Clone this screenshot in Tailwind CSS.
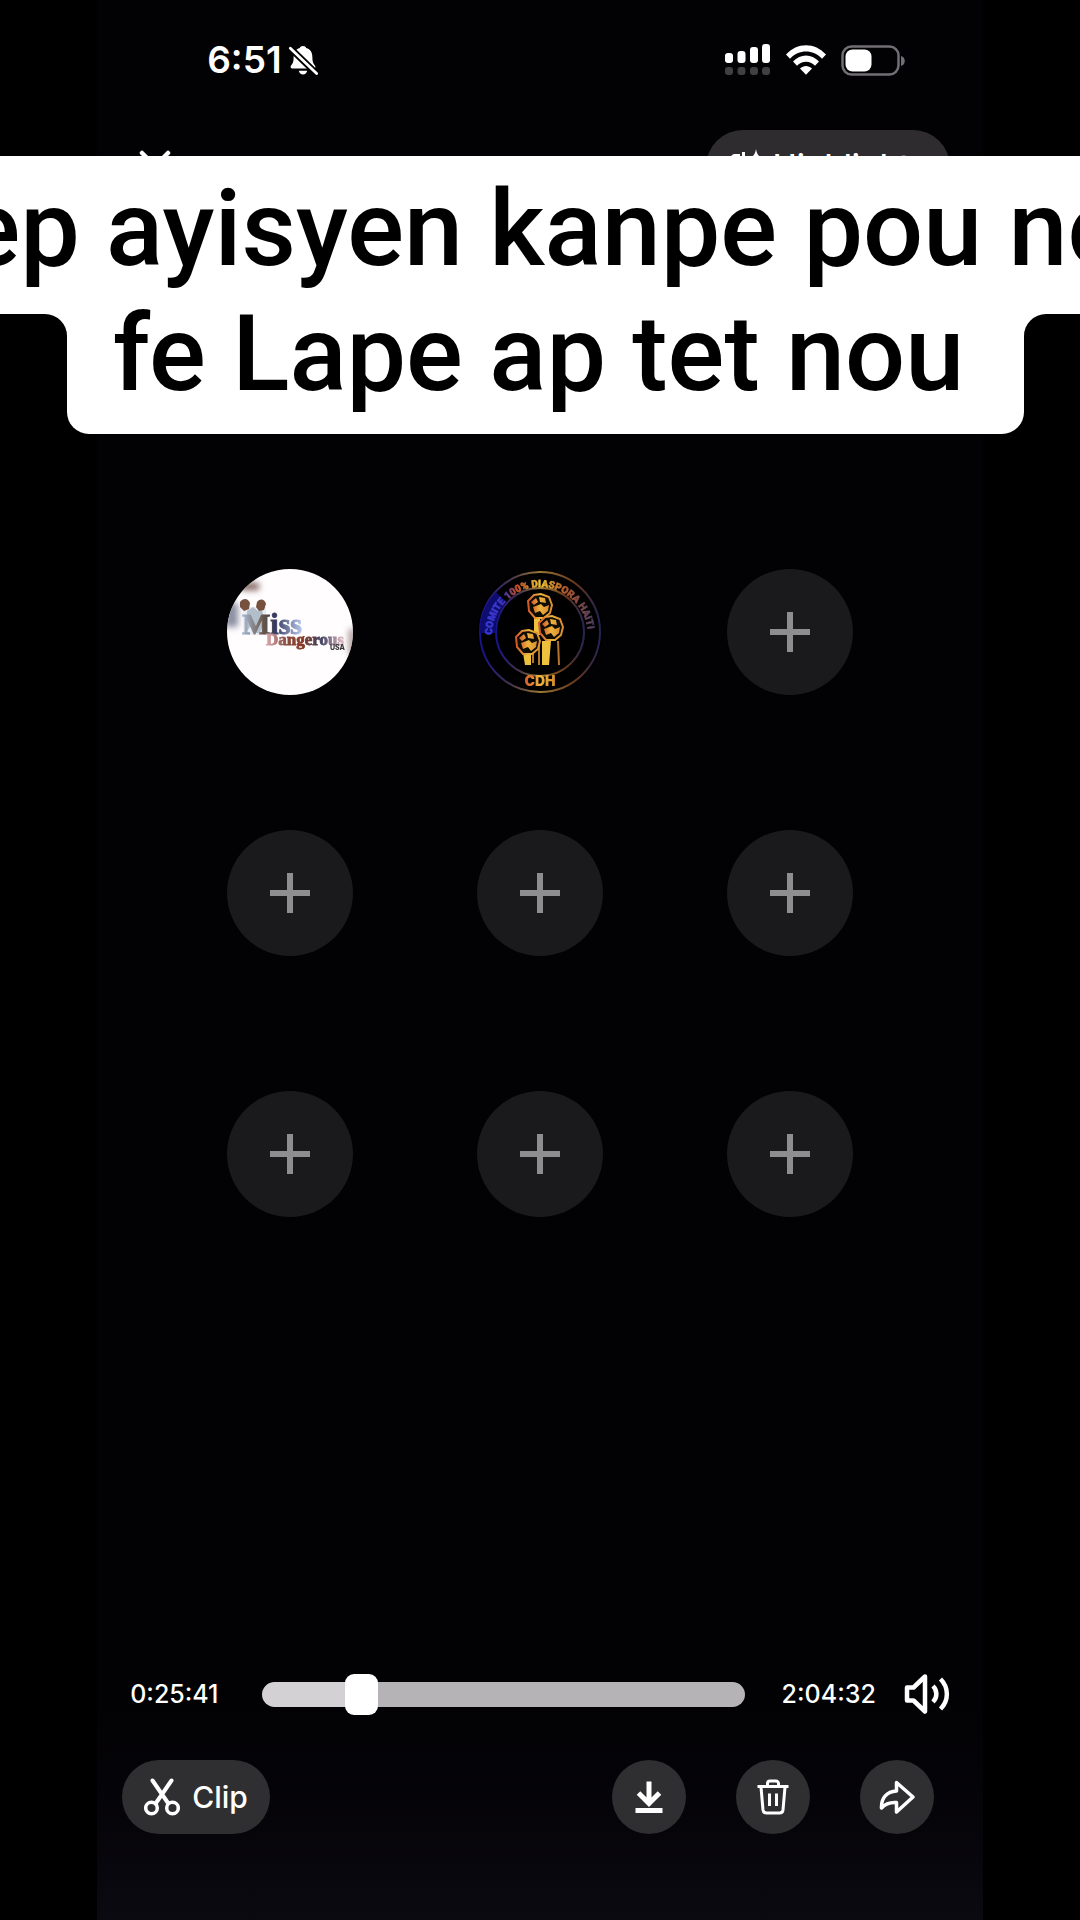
<!DOCTYPE html>
<html lang="ht">
<head>
    <meta charset="UTF-8" />
    <meta name="viewport" content="width=device-width, initial-scale=1" />
    <title>Replay</title>
    <script src="https://cdn.jsdelivr.net/npm/@tailwindcss/browser@4"></script>
</head>
<body class="relative min-h-screen flex flex-col overflow-x-hidden bg-black font-['Inter',sans-serif] text-white">
    <div class="mx-[9%] flex grow flex-col bg-linear-to-b from-[#020103] from-88% to-[#0b0a11]">
        <!-- Status bar -->
        <header class="flex h-[120px] items-center justify-between pl-[110px] pr-[78px]">
            <div class="flex items-center gap-[6px]">
                <span class="text-[37px] leading-[44px] font-semibold">6:51</span>
                <svg class="h-8 w-[30px]" viewBox="0 0 32 32" fill="#fff">
                    <path d="M16 1c2 0 3 1 3.400 2.200C24 4.500 26 8 26 13c0 6 1.500 7 3 9.500.600 1.500 0 2.500-1.500 2.500H4.500C3 25 2.400 24 3 22.500 4.500 20 6 19 6 13c0-5 2-8.500 6.600-9.800C13 2 14 1 16 1zM11.500 27.500h9c-.5 2.400-2.300 4-4.500 4s-4-1.600-4.500-4z" />
                    <path d="M2 3l29 28" stroke="#000" stroke-width="7" />
                    <path d="M2.500 3.500l28 27" stroke="#fff" stroke-width="3" stroke-linecap="round" />
                </svg>
            </div>
            <div class="flex items-center gap-[15px]">
                <svg class="h-8 w-[46px]" viewBox="0 0 46 32" fill="#fff">
                    <rect x="0" y="9" width="8" height="10" rx="3" />
                    <rect x="12.500" y="7" width="8" height="12" rx="3" />
                    <rect x="25" y="3" width="8" height="16" rx="3" />
                    <rect x="37" y="0" width="8" height="19" rx="3" />
                    <g fill="#403f42">
                        <rect x="0" y="23" width="8" height="8" rx="3" />
                        <rect x="12.500" y="23" width="8" height="8" rx="3" />
                        <rect x="25" y="23" width="8" height="8" rx="3" />
                        <rect x="37" y="23" width="8" height="8" rx="3" />
                    </g>
                </svg>
                <svg class="h-[30px] w-10" viewBox="0 0 40 30" fill="#fff">
                    <path d="M0 9.500C11-3 29-3 40 9.500l-4 4.200C27 4 13 4 4 13.700z" />
                    <path d="M7 16.500c7.500-8 18.500-8 26 0l-4 4.200c-5-5.300-13-5.300-18 0z" />
                    <path d="M14 23.500c3.500-3.500 8.500-3.500 12 0l-6 6.200z" />
                </svg>
                <svg class="h-[31px] w-[64px]" viewBox="0 0 64 31">
                    <rect x="1.500" y="1.500" width="56" height="28" rx="9" fill="none" stroke="#716f73" stroke-width="2.500" />
                    <rect x="4.500" y="4.500" width="26" height="22" rx="7" fill="#fff" />
                    <path d="M60 11c5 1 5 9 0 10z" fill="#716f73" />
                </svg>
            </div>
        </header>

        <!-- Top actions -->
        <div class="flex items-start justify-between pt-[10px] pl-[42px] pr-[33px]">
            <button type="button" aria-label="Close" class="pt-5">
                <svg class="h-8 w-8" viewBox="0 0 32 32" fill="none" stroke="#fff" stroke-width="4.500" stroke-linecap="round">
                    <path d="M3 3l26 26M29 3L3 29" />
                </svg>
            </button>
            <button type="button" class="flex h-[74px] items-center gap-2 rounded-full bg-[#2e2c2f] px-[23px] text-[32px] leading-[38px] font-medium">
                <svg class="h-9 w-9" viewBox="0 0 36 36" fill="none" stroke="#fff" stroke-width="3">
                    <path d="M11 6.500H6a3 3 0 0 0-3 3v19a3 3 0 0 0 3 3h22a3 3 0 0 0 3-3v-7M14.500 3v9" />
                    <path d="M27 0c1 6 3 8 9 9-6 1-8 3-9 9-1-6-3-8-9-9 6-1 8-3 9-9z" fill="#fff" stroke="none" />
                </svg>
                Highlights
            </button>
        </div>

        <!-- Guest seats -->
        <main class="grid grid-cols-3 justify-items-center gap-y-[135px] px-17 pt-[365px]">
            <svg class="size-[126px] rounded-full bg-[#fffdfe]" viewBox="0 0 126 126" role="img">
                <defs>
                    <filter id="soft"><feGaussianBlur stdDeviation="3" /></filter>
                    <filter id="fine"><feGaussianBlur stdDeviation=".6" /></filter>
                    <linearGradient id="miss"><stop offset="0" stop-color="#a9bdd8" /><stop offset=".35" stop-color="#685748" /><stop offset=".55" stop-color="#35395f" /><stop offset="1" stop-color="#b8caee" /></linearGradient>
                    <linearGradient id="danger"><stop offset="0" stop-color="#dba9b0" /><stop offset=".25" stop-color="#885044" /><stop offset=".45" stop-color="#8a3a26" /><stop offset=".7" stop-color="#3f4160" /><stop offset="1" stop-color="#edc2cb" /></linearGradient>
                </defs>
                <g filter="url(#soft)">
                    <path d="M14 14h18v7H14z" fill="#795a55" />
                    <path d="M-2 34h13v24H-2z" fill="#8b8da1" />
                    <path d="M122 60h6v26h-6z" fill="#a58b8b" />
                </g>
                <g filter="url(#fine)">
                    <path d="M16 38h23v28H16z" fill="#dbe4ee" opacity=".6" />
                    <path d="M20 42l6-4 5 4 4-2 2 12-4 12h-5l-2-10-6 8z" fill="#8e9cae" opacity=".6" />
                    <path d="M13 33c3-4 8-4 10 1l-1 6-5 2-4-4zM30 33c3-4 8-3 9 2l-2 6-5 1-3-4z" fill="#76513c" />
                    <text x="15" y="65" font-family="Liberation Serif" font-weight="700" font-size="30" fill="url(#miss)" stroke="url(#miss)">Miss</text>
                    <text x="39" y="76" font-family="Liberation Serif" font-weight="700" font-size="17" fill="url(#danger)" stroke="url(#danger)" stroke-width=".8">Dangerous</text>
                    <text x="103" y="81" font-family="Inter" font-weight="800" font-size="7" fill="#3a3638">USA</text>
                </g>
            </svg>
            <svg class="size-[126px] rounded-full bg-black" viewBox="0 0 126 126" role="img">
                <defs>
                    <path id="arc" d="M15 66A48 48 0 1 1 111 66" />
                    <linearGradient id="ring"><stop offset="0" stop-color="#15128c" /><stop offset=".25" stop-color="#43324b" /><stop offset=".5" stop-color="#9b7833" /><stop offset=".8" stop-color="#64361f" /><stop offset="1" stop-color="#242452" /></linearGradient>
                    <linearGradient id="name" gradientUnits="userSpaceOnUse" x1="3" y1="0" x2="123" y2="0"><stop offset="0" stop-color="#3a3ae0" /><stop offset=".2" stop-color="#3a34c0" /><stop offset=".3" stop-color="#c34a28" /><stop offset=".5" stop-color="#efc435" /><stop offset=".7" stop-color="#b55a2a" /><stop offset="1" stop-color="#35356a" /></linearGradient>
                    <linearGradient id="fist"><stop offset="0" stop-color="#d2572b" /><stop offset=".5" stop-color="#edb43c" /><stop offset="1" stop-color="#d98c32" /></linearGradient>
                    <g id="hand">
                        <path d="M2 8l6-6 7-1 8 3 3 8-2 8-6 5H9l-6-7z" fill="#0c0703" stroke="url(#fist)" stroke-width="2" />
                        <path d="M5 9l5-4 2 4-4 3zM13 4l6 1 1 5-6-1zM7 14l8-3 3 3 5-2-1 6-5 4-3-4-5 2z" fill="url(#fist)" />
                    </g>
                </defs>
                <g filter="url(#fine)">
                    <circle cx="63" cy="63" r="60" fill="none" stroke="url(#ring)" stroke-width="2" />
                    <circle cx="63" cy="63" r="44" fill="none" stroke="url(#ring)" stroke-width="2" />
                    <path d="M3 64a60 60 0 0 1 16-41l10 10a45 45 0 0 0-11 31z" fill="#0e0d70" />
                    <text font-family="Roboto" font-weight="900" font-size="10" fill="url(#name)" stroke="url(#name)" stroke-width=".5"><textPath href="#arc">COMITE 100% DIASPORA HAITI</textPath></text>
                    <path d="M57 46h6v20h-6zM65 72h9l-2 24h-7zM46 84h8v12h-6z" fill="#edc03c" />
                    <path d="M62 72v24M81 72l1 24M56 84v10" stroke="#b4742e" stroke-width="2" fill="none" />
                    <use href="#hand" x="49" y="24" />
                    <use href="#hand" x="60" y="46" />
                    <use href="#hand" x="37" y="60" />
                    <text x="63" y="117" text-anchor="middle" font-family="Inter" font-weight="900" font-size="14" fill="url(#fist)">CDH</text>
                </g>
            </svg>
            <button type="button" aria-label="Add guest" class="flex size-[126px] items-center justify-center rounded-full bg-[#1a191b]">
                <svg class="size-10" viewBox="0 0 40 40" stroke="#8e8d8f" stroke-width="6"><path d="M20 0v40M0 20h40" /></svg>
            </button>
            <button type="button" aria-label="Add guest" class="flex size-[126px] items-center justify-center rounded-full bg-[#1a191b]">
                <svg class="size-10" viewBox="0 0 40 40" stroke="#8e8d8f" stroke-width="6"><path d="M20 0v40M0 20h40" /></svg>
            </button>
            <button type="button" aria-label="Add guest" class="flex size-[126px] items-center justify-center rounded-full bg-[#1a191b]">
                <svg class="size-10" viewBox="0 0 40 40" stroke="#8e8d8f" stroke-width="6"><path d="M20 0v40M0 20h40" /></svg>
            </button>
            <button type="button" aria-label="Add guest" class="flex size-[126px] items-center justify-center rounded-full bg-[#1a191b]">
                <svg class="size-10" viewBox="0 0 40 40" stroke="#8e8d8f" stroke-width="6"><path d="M20 0v40M0 20h40" /></svg>
            </button>
            <button type="button" aria-label="Add guest" class="flex size-[126px] items-center justify-center rounded-full bg-[#1a191b]">
                <svg class="size-10" viewBox="0 0 40 40" stroke="#8e8d8f" stroke-width="6"><path d="M20 0v40M0 20h40" /></svg>
            </button>
            <button type="button" aria-label="Add guest" class="flex size-[126px] items-center justify-center rounded-full bg-[#1a191b]">
                <svg class="size-10" viewBox="0 0 40 40" stroke="#8e8d8f" stroke-width="6"><path d="M20 0v40M0 20h40" /></svg>
            </button>
            <button type="button" aria-label="Add guest" class="flex size-[126px] items-center justify-center rounded-full bg-[#1a191b]">
                <svg class="size-10" viewBox="0 0 40 40" stroke="#8e8d8f" stroke-width="6"><path d="M20 0v40M0 20h40" /></svg>
            </button>
        </main>

        <!-- Player controls -->
        <footer class="mt-auto pb-[86px]">
            <div class="flex items-center px-[33px]">
                <label for="seek" class="w-[132px] text-[25px] leading-8 font-medium">0:25:41</label>
                <input id="seek" type="range" min="0" max="1000" value="185" class="h-[42px] min-w-0 grow appearance-none bg-transparent [&::-webkit-slider-runnable-track]:h-[25px] [&::-webkit-slider-runnable-track]:rounded-full [&::-webkit-slider-runnable-track]:bg-linear-to-r [&::-webkit-slider-runnable-track]:from-[#d3d1d4] [&::-webkit-slider-runnable-track]:from-20% [&::-webkit-slider-runnable-track]:to-[#b5b3b6] [&::-webkit-slider-runnable-track]:to-20% [&::-webkit-slider-thumb]:-mt-2 [&::-webkit-slider-thumb]:h-[41px] [&::-webkit-slider-thumb]:w-[33px] [&::-webkit-slider-thumb]:appearance-none [&::-webkit-slider-thumb]:rounded-[9px] [&::-webkit-slider-thumb]:bg-white" />
                <span class="w-[131px] text-right text-[25px] leading-8 font-medium">2:04:32</span>
                <button type="button" aria-label="Volume" class="ml-7">
                    <svg class="h-[42px] w-[46px]" viewBox="0 0 46 42" fill="none" stroke="#fff" stroke-width="4.500" stroke-linejoin="round">
                        <path d="M3 14.500v13h6.500L21 38.500V3.500L9.500 14.500z" />
                        <path d="M29 13c4.500 4.500 4.500 11.500 0 16M36.500 6c8.500 8.500 8.500 21.500 0 30" />
                    </svg>
                </button>
            </div>
            <div class="flex items-center justify-between pt-[45px] pl-[25px] pr-[49px]">
                <button type="button" class="flex h-[74px] items-center gap-3 rounded-full bg-[#2f2e31] px-[22px] text-[30px] leading-[38px] font-medium">
                    <svg class="h-[38px] w-9" viewBox="0 0 36 38" fill="none" stroke="#fff" stroke-width="3.500" stroke-linecap="round">
                        <path d="M8.500 2.500L24 25M27.500 2.500L12 25" stroke-width="4" />
                        <circle cx="7.500" cy="30" r="5.800" />
                        <circle cx="28.500" cy="30" r="5.800" />
                    </svg>
                    Clip
                </button>
                <div class="flex gap-[50px]">
                    <button type="button" aria-label="Download" class="flex size-[74px] items-center justify-center rounded-full bg-[#2f2e31]">
                        <svg class="size-9" viewBox="0 0 36 36" fill="none" stroke="#fff" stroke-width="5">
                            <path d="M18 2.500V24M7.500 14L18 24.500 28.500 14" />
                            <path d="M4.500 31.500h27" />
                        </svg>
                    </button>
                    <button type="button" aria-label="Delete" class="flex size-[74px] items-center justify-center rounded-full bg-[#2f2e31]">
                        <svg class="size-9" viewBox="0 0 36 36" fill="none" stroke="#fff" stroke-width="3">
                            <path d="M2.500 7.500h31M12.500 7V4.500a2.500 2.500 0 0 1 2.500-2.500h6a2.500 2.500 0 0 1 2.500 2.500V7M6 8l2 23a3.500 3.500 0 0 0 3.500 3h13a3.500 3.500 0 0 0 3.500-3l2-23M14.500 14.500V27M21.500 14.500V27" />
                        </svg>
                    </button>
                    <button type="button" aria-label="Share" class="flex size-[74px] items-center justify-center rounded-full bg-[#2f2e31]">
                        <svg class="size-9" viewBox="0 0 36 36" fill="none" stroke="#fff" stroke-width="3.500" stroke-linejoin="round">
                            <path d="M17.500 3.500L34 18 17.500 33V23.500C10 23 6 25 2.500 29 2 19 8 12.500 17.500 12z" />
                        </svg>
                    </button>
                </div>
            </div>
        </footer>
    </div>

    <!-- Caption sticker over the video -->
    <div class="absolute inset-x-0 top-[156px] overflow-hidden font-['Roboto',sans-serif] text-[106px] leading-[125px] font-medium whitespace-nowrap text-black">
        <div class="flex justify-center bg-white pt-[11px] pb-[22px] pl-[11px]">
            <p>ep ayisyen kanpe pou no</p>
        </div>
        <div class="flex justify-center pl-[11px]">
            <div class="relative rounded-b-[22px] bg-white pr-[60px] pb-[17px] pl-[46px]">
                <svg class="absolute top-0 -left-[22px] size-[22px]" viewBox="0 0 24 24" fill="#fff"><path d="M0 0h24v24A24 24 0 0 0 0 0z" /></svg>
                <svg class="absolute top-0 -right-[22px] size-[22px]" viewBox="0 0 24 24" fill="#fff"><path d="M24 0H0v24A24 24 0 0 1 24 0z" /></svg>
                <p class="-mt-[22px]">fe Lape ap tet nou</p>
            </div>
        </div>
    </div>
</body>
</html>
